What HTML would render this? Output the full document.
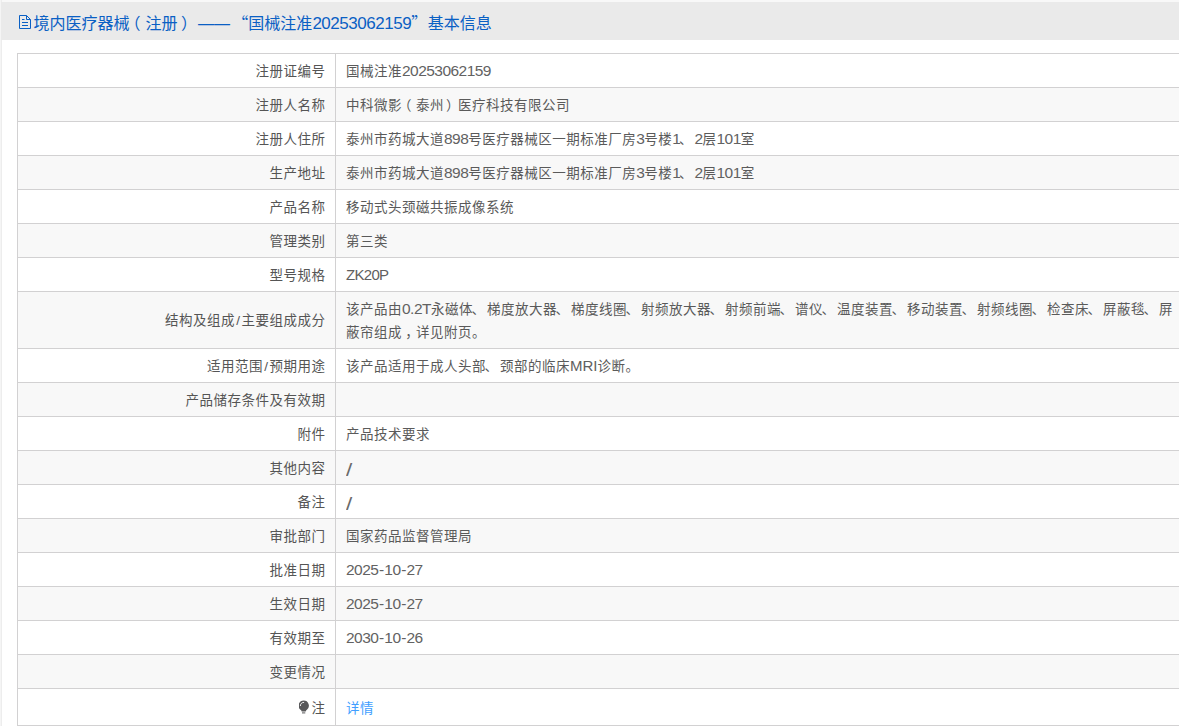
<!DOCTYPE html>
<html lang="zh-CN">
<head>
<meta charset="utf-8">
<title>境内医疗器械（注册）基本信息</title>
<style>
*{box-sizing:border-box}
html,body{margin:0;padding:0}
body{width:1179px;height:726px;overflow:hidden;background:#fff;position:relative;
font-family:"Liberation Sans","Noto Sans CJK SC",sans-serif;font-size:14px;color:#333}
.edge-l{position:absolute;left:0;top:0;width:2px;height:726px;background:linear-gradient(90deg,#f5f5f5 0,#f5f5f5 1px,#ededed 1px,#ededed 2px)}
.edge-t{position:absolute;left:0;top:0;width:1179px;height:2px;background:#f8f8f8}
.hd{position:absolute;left:1px;top:2px;width:1178px;height:38px;background:#eaeaea;border-bottom:0;color:#0a60c4;
font-size:16px;line-height:39px;white-space:nowrap;z-index:2}
.hd svg{position:absolute;left:18px;top:13px}
.hd .t{position:absolute;left:32.500px;top:1px}
.hd i,.hd b,.hd u{font-style:normal;font-weight:normal;text-decoration:none;display:inline-block}
.hd .pl{position:relative;left:-5px}
.hd .pr{position:relative;left:3.500px}
.hd .dash{margin-left:4.500px;width:34.300px}
.hd .ql{width:16px;text-align:right;font-family:"Noto Sans CJK SC",sans-serif}
.hd .qr{width:16.500px;text-align:left;font-family:"Noto Sans CJK SC",sans-serif}
.hd u{font-size:17px;letter-spacing:-.47px;line-height:1}
table{position:absolute;left:17px;top:53px;width:1180px;border-collapse:collapse;table-layout:fixed}
td{border:1px solid #d2d1d2;height:34px;padding:2px 10px 0;line-height:23px;font-size:13.500px;letter-spacing:.5px;vertical-align:middle;white-space:nowrap}
td.k{width:318px;text-align:right;color:#555;padding-right:9.500px}
td.v{color:#5a5a5a;white-space:normal}
tr:nth-child(even) td{background:#f8f8f8}
tr.tall td{height:57px}
tr.tall td.k{padding-top:0}
tr.last td{height:37px}
a{color:#409eff;text-decoration:none}
.n,.d{font-size:15.500px;letter-spacing:-.54px;line-height:1;color:#626262}
.d i{font-style:normal;margin:0 .7px}
.l{font-size:15px;letter-spacing:-.7px;line-height:1;color:#606060}
.sv{color:#6a6a6a;font-size:18px;line-height:1;position:relative;top:2.500px;display:inline-block;transform:scaleX(1.25);transform-origin:0 0}
td i.pl{font-style:normal;position:relative;left:-4px}
td i.pr{font-style:normal;position:relative;left:2px}
td i.dn{font-style:normal;position:relative;left:-1.500px}
td i.cm{font-style:normal;position:relative;left:3.300px}
.sl{margin:0 1.100px 0 1.200px}
.wrap{width:840px;white-space:nowrap}
</style>
</head>
<body>
<div class="edge-t"></div><div class="edge-l"></div>
<div class="hd">
<svg width="12" height="14" viewBox="0 0 12 14" fill="none" stroke="#0a60c4" stroke-width="1"><path d="M.5 .5H7.5L11.5 4.500V13.500H.5Z"/><path d="M7.500 .5V4.500H11.500"/><path d="M3 4.500H5.500M3 7.500H9M3 10.500H9"/></svg>
<span class="t">境内医疗器械<i class="pl">（</i>注册<i class="pr">）</i><b class="dash">——</b><i class="ql">“</i>国械注准<u>20253062159</u><i class="qr">”</i>基本信息</span>
</div>
<table>
<tr><td class="k">注册证编号</td><td class="v">国械注准<span class="n">20253062159</span></td></tr>
<tr><td class="k">注册人名称</td><td class="v">中科微影<i class="pl">（</i>泰州<i class="pr">）</i>医疗科技有限公司</td></tr>
<tr><td class="k">注册人住所</td><td class="v">泰州市药城大道<span class="n">898</span>号医疗器械区一期标准厂房<span class="n">3</span>号楼<span class="n">1</span><i class="dn">、</i><span class="n">2</span>层<span class="n">101</span>室</td></tr>
<tr><td class="k">生产地址</td><td class="v">泰州市药城大道<span class="n">898</span>号医疗器械区一期标准厂房<span class="n">3</span>号楼<span class="n">1</span><i class="dn">、</i><span class="n">2</span>层<span class="n">101</span>室</td></tr>
<tr><td class="k">产品名称</td><td class="v">移动式头颈磁共振成像系统</td></tr>
<tr><td class="k">管理类别</td><td class="v">第三类</td></tr>
<tr><td class="k">型号规格</td><td class="v"><span class="l">ZK20P</span></td></tr>
<tr class="tall"><td class="k">结构及组成<span class="sl">/</span>主要组成成分</td><td class="v"><div class="wrap">该产品由<span class="n" style="letter-spacing:-.5px">0.2T</span>永磁体<i class="dn">、</i>梯度放大器<i class="dn">、</i>梯度线圈<i class="dn">、</i>射频放大器<i class="dn">、</i>射频前端<i class="dn">、</i>谱仪<i class="dn">、</i>温度装置<i class="dn">、</i>移动装置<i class="dn">、</i>射频线圈<i class="dn">、</i>检查床<i class="dn">、</i>屏蔽毯<i class="dn">、</i>屏<br>蔽帘组成<i class="cm">，</i>详见附页。</div></td></tr>
<tr><td class="k">适用范围<span class="sl">/</span>预期用途</td><td class="v">该产品适用于成人头部<i class="dn">、</i>颈部的临床<span class="l" style="letter-spacing:0">MRI</span>诊断。</td></tr>
<tr><td class="k">产品储存条件及有效期</td><td class="v"></td></tr>
<tr><td class="k">附件</td><td class="v">产品技术要求</td></tr>
<tr><td class="k">其他内容</td><td class="v"><span class="sv">/</span></td></tr>
<tr><td class="k">备注</td><td class="v"><span class="sv">/</span></td></tr>
<tr><td class="k">审批部门</td><td class="v">国家药品监督管理局</td></tr>
<tr><td class="k">批准日期</td><td class="v"><span class="d">2025<i>-</i>10<i>-</i>27</span></td></tr>
<tr><td class="k">生效日期</td><td class="v"><span class="d">2025<i>-</i>10<i>-</i>27</span></td></tr>
<tr><td class="k">有效期至</td><td class="v"><span class="d">2030<i>-</i>10<i>-</i>26</span></td></tr>
<tr><td class="k">变更情况</td><td class="v"></td></tr>
<tr class="last"><td class="k"><svg width="12.500" height="14" viewBox="0.4 -0.3 12.500 14" style="vertical-align:-1.600px"><path d="M5.100 .3A5.100 5.100 0 0 0 1.900 9.400C2.600 10 3 10.500 3.100 11.200H7.100C7.200 10.500 7.600 10 8.300 9.400A5.100 5.100 0 0 0 5.100 .3Z" fill="#58585a"/><rect x="3.400" y="12.100" width="3.300" height="1" fill="#58585a"/><path d="M1.800 5.700A3.400 3.400 0 0 1 5.500 2.100" stroke="#fff" stroke-width=".9" fill="none"/></svg>注</td><td class="v"><a>详情</a></td></tr>
</table>
</body>
</html>
